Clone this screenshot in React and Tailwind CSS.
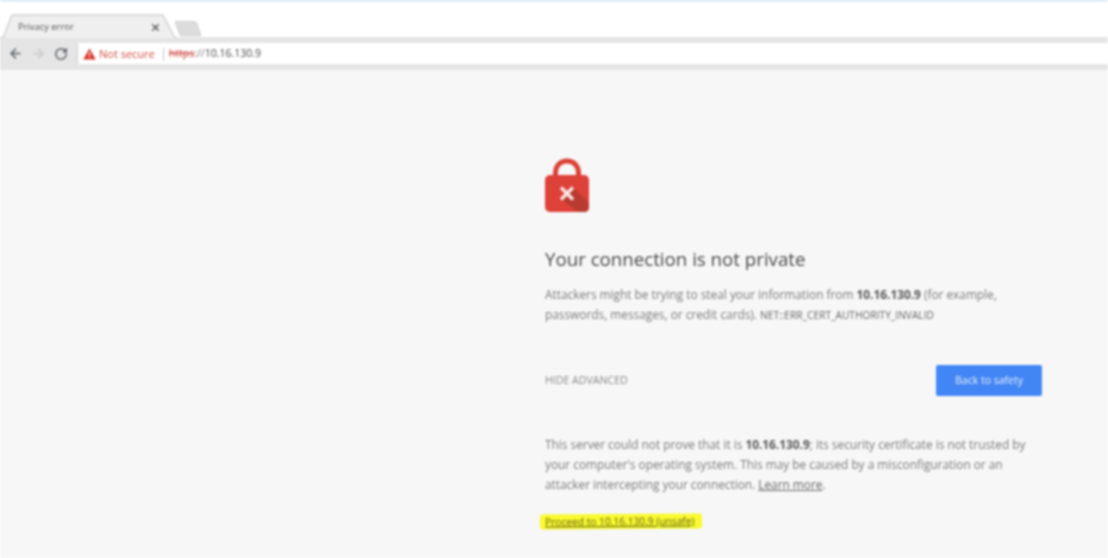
import { ArrowLeft, ArrowRight, RotateCw, X } from 'lucide-react'

function Toolbar() {
  return (
    <div className="h-[33px] bg-[#e5e5e5] flex items-center pl-[8px]">
      {/* Nav buttons */}
      <div className="flex items-center gap-[8px] w-[69px] text-[#5f6368]">
        <ArrowLeft size={15} strokeWidth={2.4} />
        <ArrowRight size={15} strokeWidth={2.4} className="text-[#c9c9c9]" />
        <RotateCw size={14} strokeWidth={2.6} />
      </div>

      {/* Address bar */}
      <div className="flex-1 h-[21px] bg-white border-l border-[#cfcfcf] flex items-center pl-[5px] pt-px text-[11px]">
        <svg width="13" height="12" viewBox="0 0 13 12" className="mr-[3px]">
          <path d="M6.5 0.5 L12.8 11.5 H0.2 Z" fill="#d9362b" />
          <rect x="5.9" y="4" width="1.2" height="4" fill="#fff" />
          <rect x="5.9" y="8.8" width="1.2" height="1.3" fill="#fff" />
        </svg>
        <span className="text-[#cf4a3f]">Not secure</span>
        <span className="w-px h-[13px] bg-[#c4c4c4] ml-[8px] mr-[5px]" />
        <span className="text-[10.5px] text-[#c9443a] line-through">https</span>
        <span className="text-[10.5px] text-[#777]">://</span>
        <span className="text-[10.5px] text-[#444]">10.16.130.9</span>
      </div>
    </div>
  )
}

function Tabs() {
  return (
    <div className="h-[36px] flex items-end bg-white">
      <div className="relative w-[170px] h-[23px] shrink-0 flex items-center pl-[18px] pr-[9px] pt-[3px] justify-between">
        <svg width="176" height="24" viewBox="0 0 176 24" className="absolute left-0 top-0">
          <path d="M0 24 H3 L12 1 H163 L175 24 H176" fill="#efefef" stroke="#bdbdbd" strokeWidth="1" />
        </svg>
        <span className="relative text-[9.4px] text-[#555]">Privacy error</span>
        <X size={11} strokeWidth={3} className="relative text-[#555]" />
      </div>
      <div className="h-[15px] w-[22px] ml-[7px] skew-x-[20deg] rounded-[2px] bg-[#dcdcdc] border border-[#cfcfcf] mb-[1px]" />
    </div>
  )
}

function LockIcon() {
  return (
    <svg width="46" height="56" viewBox="0 0 46 56" className="block">
      <path d="M10.5 22 V15 C10.5 7 16 3 22 3 C28 3 33.5 7 33.5 15 V22" fill="none" stroke="#dc4136" strokeWidth="5" />
      <rect x="0" y="17" width="44" height="37" rx="5" fill="#de4138" />
      <path d="M28 29 L44 45 V49 C44 52 42 54 39 54 H33 L16 41 Z" fill="#b93a30" />
      <path d="M16 29.5 L28 41.5 M28 29.5 L16 41.5" stroke="#f9e7e5" strokeWidth="3.4" />
    </svg>
  )
}

export default function App() {
  return (
    <div className="w-[1108px] h-[558px] overflow-hidden bg-[#f7f7f7] font-['Open_Sans',sans-serif] blur-[0.8px]">
      <div className="h-px bg-[#a9d3f2]" />
      <Tabs />
      <Toolbar />

      <main className="ml-[545px] w-[497px] pt-[88px]">
        <LockIcon />

        <h1 className="mt-[32px] text-[18.7px] leading-[26px] text-[#4a4a4a]">Your connection is not private</h1>

        <p className="mt-[12px] text-[11.85px] leading-[20px] text-[#7a7a7a]">
          Attackers might be trying to steal your information from <b className="font-bold text-[#555]">10.16.130.9</b> (for example,
          passwords, messages, or credit cards). <span className="text-[10.2px] text-[#666]">NET::ERR_CERT_AUTHORITY_INVALID</span>
        </p>

        <div className="mt-[40px] flex items-center justify-between">
          <span className="pt-[1px] text-[10.6px] text-[#8a8a8a]">HIDE ADVANCED</span>
          <button className="w-[106px] h-[31px] bg-[#4285f4] rounded-[2px] text-[10.5px] text-[#e8f0fe]">Back to safety</button>
        </div>

        <p className="mt-[38px] text-[11.85px] leading-[20px] text-[#7a7a7a]">
          This server could not prove that it is <b className="font-bold text-[#555]">10.16.130.9</b>; its security certificate is not trusted by
          your computer's operating system. This may be caused by a misconfiguration or an attacker intercepting your connection.{' '}
          <span className="underline text-[#666]">Learn more</span>.
        </p>

        <div className="mt-[13px]">
          <span className="inline-block -ml-[5px] pl-[5px] pr-[8px] py-[1px] bg-[#fafa2e] rounded-[3px] text-[10.2px] leading-[13px] text-[#5d5d20] underline -rotate-[0.4deg]">
            Proceed to 10.16.130.9 (unsafe)
          </span>
        </div>
      </main>
    </div>
  )
}
